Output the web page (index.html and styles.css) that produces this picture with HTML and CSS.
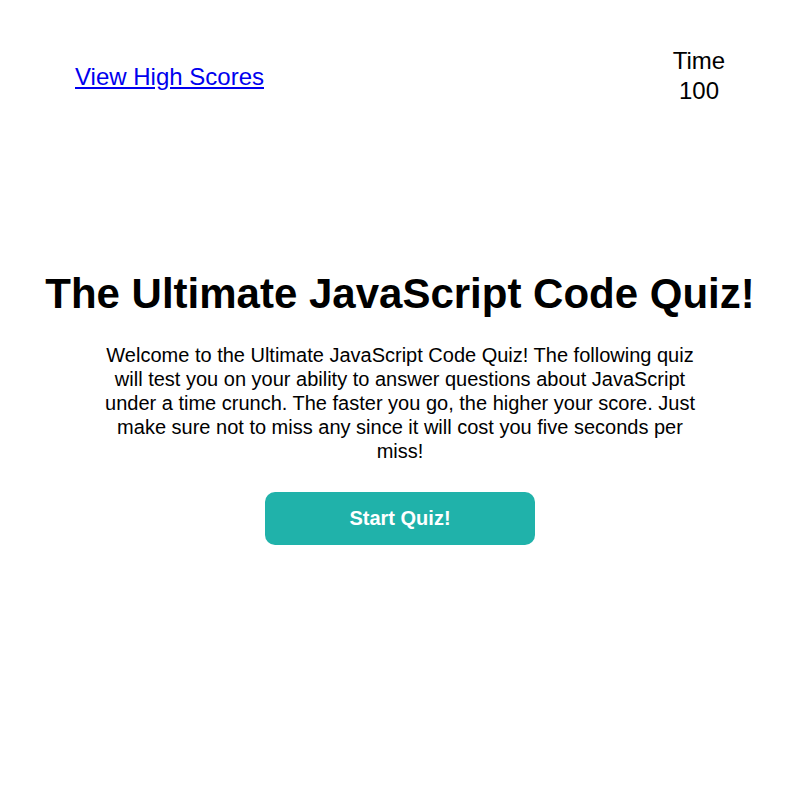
FILE: index.html
```html
<!DOCTYPE html>
<html>
<head>
<meta charset="utf-8">
<link rel="stylesheet" href="styles.css">
</head>
<body>
<header class="top">
  <a class="scores" href="#">View High Scores</a>
  <div class="timer">
    <div>Time</div>
    <div>100</div>
  </div>
</header>
<main class="intro">
  <h1 class="title">The Ultimate JavaScript Code Quiz!</h1>
  <p class="desc">Welcome to the Ultimate JavaScript Code Quiz! The following quiz will test you on your ability to answer questions about JavaScript under a time crunch. The faster you go, the higher your score. Just make sure not to miss any since it will cost you five seconds per miss!</p>
  <button class="start">Start Quiz!</button>
</main>
</body>
</html>
```
FILE: styles.css
```css
html, body {
  margin: 0;
  padding: 0;
  background: #fff;
  font-family: "Liberation Sans", Arial, sans-serif;
  color: #000;
}
.top {
  display: flex;
  justify-content: space-between;
  align-items: flex-start;
  padding: 46px 52px 0 75px;
}
.scores {
  font-size: 24px;
  color: #0000ee;
  text-decoration: underline;
  margin-top: 17px;
}
.timer {
  font-size: 24px;
  text-align: center;
  line-height: 30px;
  width: 98px;
}
.intro {
  display: flex;
  flex-direction: column;
  align-items: center;
  margin-top: 164px;
}
.title {
  font-size: 42px;
  font-weight: bold;
  margin: 0;
  line-height: 48px;
}
.desc {
  width: 600px;
  font-size: 20px;
  line-height: 24px;
  text-align: center;
  margin: 25px 0 29px;
}
.start {
  width: 270px;
  height: 53px;
  background: #20b2aa;
  color: #fff;
  border: none;
  border-radius: 10px;
  font-family: "Liberation Sans", Arial, sans-serif;
  font-size: 20px;
  font-weight: bold;
}
```
